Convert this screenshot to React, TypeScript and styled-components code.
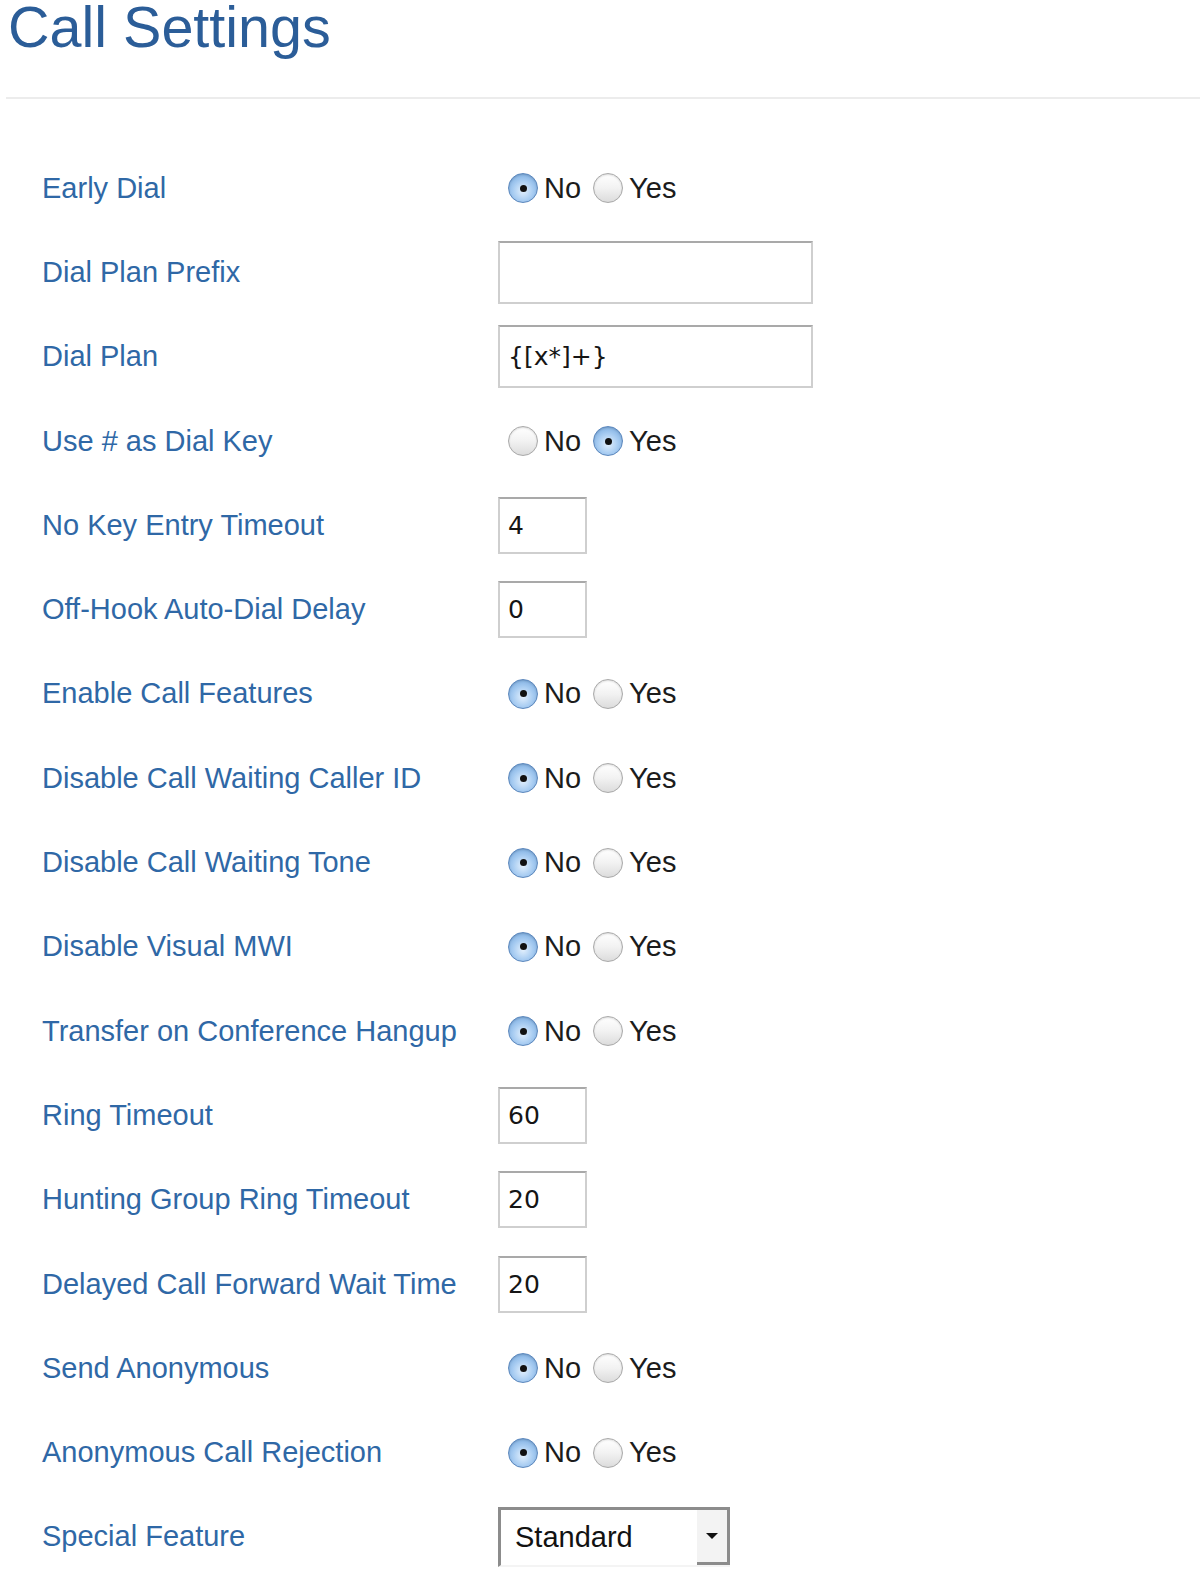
import React from "react";
import styled, { createGlobalStyle } from "styled-components";

const GlobalStyle = createGlobalStyle`
  html, body {
    margin: 0;
    padding: 0;
    background: #ffffff;
  }
  body {
    font-family: "Liberation Sans", Arial, Helvetica, sans-serif;
  }
`;

const Page = styled.div`
  width: 1200px;
  min-height: 1584px;
  box-sizing: border-box;
`;

const Title = styled.h1`
  margin: 0 0 0 8px;
  font-size: 57.5px;
  line-height: 55px;
  font-weight: normal;
  color: #2b5d98;
`;

const Divider = styled.hr`
  margin: 42px 0 0 6px;
  border: 0;
  height: 2px;
  background: #ececec;
`;

const Form = styled.div`
  padding: 47px 0 0 42px;
`;

const Row = styled.div`
  display: grid;
  grid-template-columns: 456px 1fr;
  align-items: center;
  height: 84.3px;
`;

const Label = styled.div`
  font-size: 29px;
  color: #2f68a6;
  white-space: nowrap;
`;

const RadioGroup = styled.div`
  display: flex;
  align-items: center;
  padding-left: 10px;
`;

const RadioOption = styled.label`
  display: flex;
  align-items: center;
  gap: 6px;
  margin-right: 12px;
  font-size: 29px;
  color: #1c1c1c;
`;

const RadioDot = styled.span<{ $checked: boolean }>`
  width: 30px;
  height: 30px;
  box-sizing: border-box;
  border-radius: 50%;
  display: flex;
  align-items: center;
  justify-content: center;
  border: 1px solid ${(p) => (p.$checked ? "#5b87bd" : "#a9a9a9")};
  background: ${(p) =>
    p.$checked
      ? "radial-gradient(circle at 50% 60%, #e3f0fd 0%, #a9cdf2 45%, #6aa0d9 100%)"
      : "linear-gradient(#ffffff 0%, #f2f2f2 50%, #dcdcdc 100%)"};
  box-shadow: inset 0 1px 2px rgba(0, 0, 0, 0.15);

  &::after {
    content: "";
    display: ${(p) => (p.$checked ? "block" : "none")};
    width: 7px;
    height: 7px;
    border-radius: 50%;
    background: #111;
  }
`;

const TextBox = styled.div<{ $wide?: boolean }>`
  width: ${(p) => (p.$wide ? "315px" : "89px")};
  height: ${(p) => (p.$wide ? "63px" : "57px")};
  box-sizing: border-box;
  border: 2px solid #cfcfcf;
  border-top-color: #a9a9a9;
  padding-left: 8px;
  display: flex;
  align-items: center;
  font-family: "DejaVu Sans", Verdana, sans-serif;
  font-size: 25px;
  color: #151515;
`;

const Select = styled.div`
  width: 232px;
  height: 60px;
  box-sizing: border-box;
  border-top: 3px solid #8c8c8c;
  border-left: 3px solid #8c8c8c;
  border-bottom: 2px solid #f4f4f4;
  display: flex;
  align-items: stretch;
  font-size: 29px;
  color: #121212;
`;

const SelectValue = styled.div`
  flex: 1;
  display: flex;
  align-items: center;
  padding-left: 14px;
`;

const SelectButton = styled.div`
  width: 33px;
  box-sizing: border-box;
  background: #f3f3f3;
  border-right: 3px solid #8c8c8c;
  border-bottom: 3px solid #8c8c8c;
  display: flex;
  align-items: center;
  justify-content: center;

  &::after {
    content: "";
    width: 0;
    height: 0;
    border-left: 6px solid transparent;
    border-right: 6px solid transparent;
    border-top: 6px solid #111;
  }
`;

type Field =
  | { label: string; kind: "radio"; value: "No" | "Yes" }
  | { label: string; kind: "text"; value: string; wide?: boolean }
  | { label: string; kind: "select"; value: string };

const fields: Field[] = [
  { label: "Early Dial", kind: "radio", value: "No" },
  { label: "Dial Plan Prefix", kind: "text", value: "", wide: true },
  { label: "Dial Plan", kind: "text", value: "{[x*]+}", wide: true },
  { label: "Use # as Dial Key", kind: "radio", value: "Yes" },
  { label: "No Key Entry Timeout", kind: "text", value: "4" },
  { label: "Off-Hook Auto-Dial Delay", kind: "text", value: "0" },
  { label: "Enable Call Features", kind: "radio", value: "No" },
  { label: "Disable Call Waiting Caller ID", kind: "radio", value: "No" },
  { label: "Disable Call Waiting Tone", kind: "radio", value: "No" },
  { label: "Disable Visual MWI", kind: "radio", value: "No" },
  { label: "Transfer on Conference Hangup", kind: "radio", value: "No" },
  { label: "Ring Timeout", kind: "text", value: "60" },
  { label: "Hunting Group Ring Timeout", kind: "text", value: "20" },
  { label: "Delayed Call Forward Wait Time", kind: "text", value: "20" },
  { label: "Send Anonymous", kind: "radio", value: "No" },
  { label: "Anonymous Call Rejection", kind: "radio", value: "No" },
  { label: "Special Feature", kind: "select", value: "Standard" },
];

const Control = ({ field }: { field: Field }) => {
  if (field.kind === "radio") {
    return (
      <RadioGroup>
        {(["No", "Yes"] as const).map((opt) => (
          <RadioOption key={opt}>
            <RadioDot $checked={field.value === opt} />
            {opt}
          </RadioOption>
        ))}
      </RadioGroup>
    );
  }
  if (field.kind === "select") {
    return (
      <Select>
        <SelectValue>{field.value}</SelectValue>
        <SelectButton />
      </Select>
    );
  }
  return <TextBox $wide={field.wide}>{field.value}</TextBox>;
};

const App = () => {
  return (
    <Page>
      <GlobalStyle />
      <Title>Call Settings</Title>
      <Divider />
      <Form>
        {fields.map((field) => (
          <Row key={field.label}>
            <Label>{field.label}</Label>
            <div>
              <Control field={field} />
            </div>
          </Row>
        ))}
      </Form>
    </Page>
  );
};

export default App;
